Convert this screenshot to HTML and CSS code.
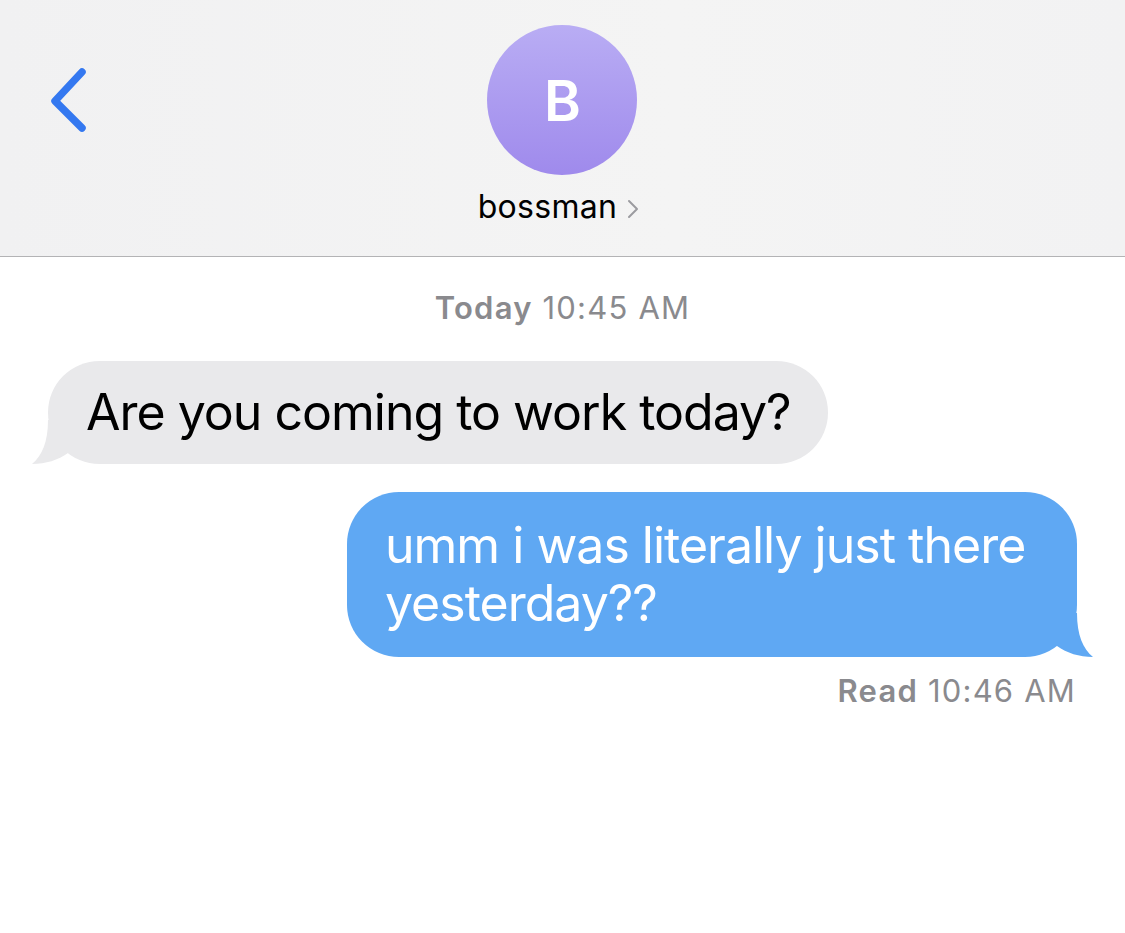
FILE: index.html
```html
<!DOCTYPE html>
<html>
<head>
<meta charset="utf-8">
<link rel="stylesheet" href="styles.css">
</head>
<body>
<header class="header">
  <div class="back">
    <svg width="42" height="66" viewBox="0 0 42 66"><path d="M35 5 L8 34 L35 61" fill="none" stroke="#3478f0" stroke-width="7.5" stroke-linecap="round" stroke-linejoin="round"/></svg>
  </div>
  <div class="contact">
    <div class="avatar">B</div>
    <div class="name">bossman <span class="chev">
      <svg width="12" height="20" viewBox="0 0 12 20"><path d="M2 2 L10 10 L2 18" fill="none" stroke="#9b9ba0" stroke-width="2" stroke-linecap="round" stroke-linejoin="round"/></svg>
    </span></div>
  </div>
  <div></div>
</header>
<main class="thread">
  <div class="stamp"><b>Today</b> 10:45 AM</div>
  <div class="row left">
    <div class="bubble received">Are you coming to work today?
      <svg class="tail tail-left" width="40" height="44" viewBox="0 0 40 44"><path d="M16 0 C16 22 10 36 0 44 C14 44 26 40 36 33 L36 0 Z" fill="#e9e9eb"/></svg>
    </div>
  </div>
  <div class="row right">
    <div class="bubble sent">umm i was literally just there yesterday??
      <svg class="tail tail-right" width="40" height="44" viewBox="0 0 40 44"><path d="M24 0 C24 22 30 36 40 44 C26 44 14 40 4 33 L4 0 Z" fill="#5fa8f3"/></svg>
    </div>
  </div>
  <div class="read"><b>Read</b> 10:46 AM</div>
</main>
</body>
</html>
```
FILE: styles.css
```css
* { box-sizing: border-box; }
html, body { margin: 0; padding: 0; background: #ffffff; }
body {
  font-family: Inter, "Noto Sans", "Liberation Sans", sans-serif;
  width: 1125px;
  height: 933px;
  overflow: hidden;
}
.header {
  height: 257px;
  background: linear-gradient(90deg, #f1f1f2 0%, #f4f4f4 60%, #f2f2f3 100%);
  border-bottom: 1px solid #b3b3b5;
  display: grid;
  grid-template-columns: 1fr auto 1fr;
}
.back {
  padding: 67px 0 0 47px;
}
.back svg { display: block; }
.contact {
  display: flex;
  flex-direction: column;
  align-items: center;
  padding-top: 25px;
}
.avatar {
  width: 150px;
  height: 150px;
  border-radius: 50%;
  background: linear-gradient(180deg, #b9adf4 0%, #9f8aec 100%);
  color: #ffffff;
  font-size: 56px;
  font-weight: 600;
  display: flex;
  align-items: center;
  justify-content: center;
  padding-top: 2px;
}
.name {
  margin-top: 12px;
  font-size: 32px;
  letter-spacing: 0.3px;
  line-height: 40px;
  color: #000000;
  display: flex;
  align-items: center;
  gap: 10px;
  margin-left: -8px;
}
.chev { display: flex; align-items: center; padding-top: 4px; }
.thread {
  display: flex;
  flex-direction: column;
  padding: 0 48px;
}
.stamp {
  margin-top: 33px;
  text-align: center;
  font-size: 31px;
  letter-spacing: 1.2px;
  line-height: 36px;
  color: #8a8a8e;
}
.stamp b, .read b { font-weight: 600; }
.row { display: flex; }
.row.left { justify-content: flex-start; margin-top: 35px; }
.row.right { justify-content: flex-end; margin-top: 28px; }
.bubble {
  position: relative;
  font-size: 50px;
  letter-spacing: -1px;
}
.received {
  background: #e9e9eb;
  color: #000000;
  border-radius: 52px;
  padding: 27px 37px 28px 38px;
  line-height: 48px;
}
.sent {
  background: #5fa8f3;
  color: #ffffff;
  border-radius: 52px;
  padding: 24px 40px 25px 38px;
  line-height: 58px;
  width: 730px;
}
.tail { position: absolute; bottom: 0; }
.tail-left { left: -16px; }
.tail-right { right: -16px; }
.read {
  margin-top: 16px;
  text-align: right;
  font-size: 31px;
  letter-spacing: 1.2px;
  line-height: 36px;
  color: #8a8a8e;
  padding-right: 1px;
}
```
